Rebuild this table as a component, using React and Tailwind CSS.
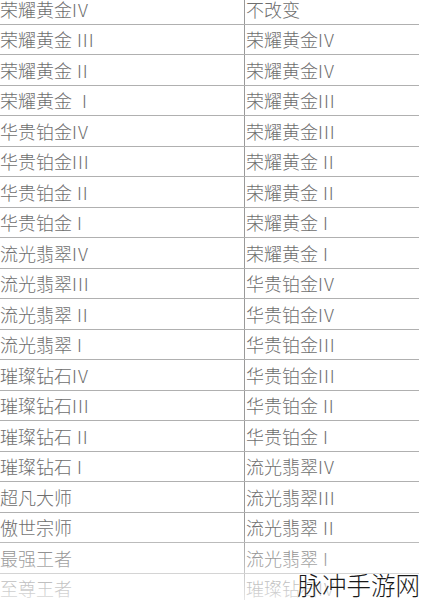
const rows = [
  ['荣耀黄金IV', '不改变'],
  ['荣耀黄金 III', '荣耀黄金IV'],
  ['荣耀黄金 II', '荣耀黄金IV'],
  ['荣耀黄金  I', '荣耀黄金III'],
  ['华贵铂金IV', '荣耀黄金III'],
  ['华贵铂金III', '荣耀黄金 II'],
  ['华贵铂金 II', '荣耀黄金 II'],
  ['华贵铂金 I', '荣耀黄金 I'],
  ['流光翡翠IV', '荣耀黄金 I'],
  ['流光翡翠III', '华贵铂金IV'],
  ['流光翡翠 II', '华贵铂金IV'],
  ['流光翡翠 I', '华贵铂金III'],
  ['璀璨钻石IV', '华贵铂金III'],
  ['璀璨钻石III', '华贵铂金 II'],
  ['璀璨钻石 II', '华贵铂金 I'],
  ['璀璨钻石 I', '流光翡翠IV'],
  ['超凡大师', '流光翡翠III'],
  ['傲世宗师', '流光翡翠 II'],
  ['最强王者', '流光翡翠 I'],
  ['至尊王者', '璀璨钻石IV'],
]

// split "荣耀黄金 III" into the name and the roman tier so the tier can be spaced out
function Rank({ text }) {
  const m = text.match(/^(\S+?)(\s*[IV]+)?$/)
  return (
    <>
      {m[1]}
      {m[2] && <span className="tracking-[1px]">{m[2]}</span>}
    </>
  )
}

export default function App() {
  return (
    <div
      className="relative w-[422px] h-[600px] overflow-hidden bg-white text-[#6e6e6e]"
      style={{ fontFamily: '"Noto Sans CJK SC", "Noto Sans", sans-serif' }}
    >
      {/* rank table, first row cut off at the top */}
      <div className="w-[419px] -mt-[6px]">
        {rows.map(([from, to], i) => (
          <div key={i} className="flex h-[30.5px] border-b border-[#b0b0b0]">
            <div className="w-[244px] flex items-center text-[18px] leading-none font-light whitespace-pre">
              <Rank text={from} />
            </div>
            <div className="flex-1 flex items-center border-l border-[#9a9a9a] pl-px text-[18px] leading-none font-light whitespace-pre">
              <Rank text={to} />
            </div>
          </div>
        ))}
      </div>

      {/* fade at the bottom */}
      <div className="absolute left-0 right-0 bottom-0 h-[72px] bg-gradient-to-b from-white/0 via-white/35 to-white/75" />

      {/* watermark */}
      <div
        className="absolute right-[2px] bottom-[3px] text-[24.5px] leading-none font-light text-[#1a1a1a]"
        style={{ textShadow: '0 0 2px #fff, 0 0 3px #fff' }}
      >
        脉冲手游网
      </div>
    </div>
  )
}
